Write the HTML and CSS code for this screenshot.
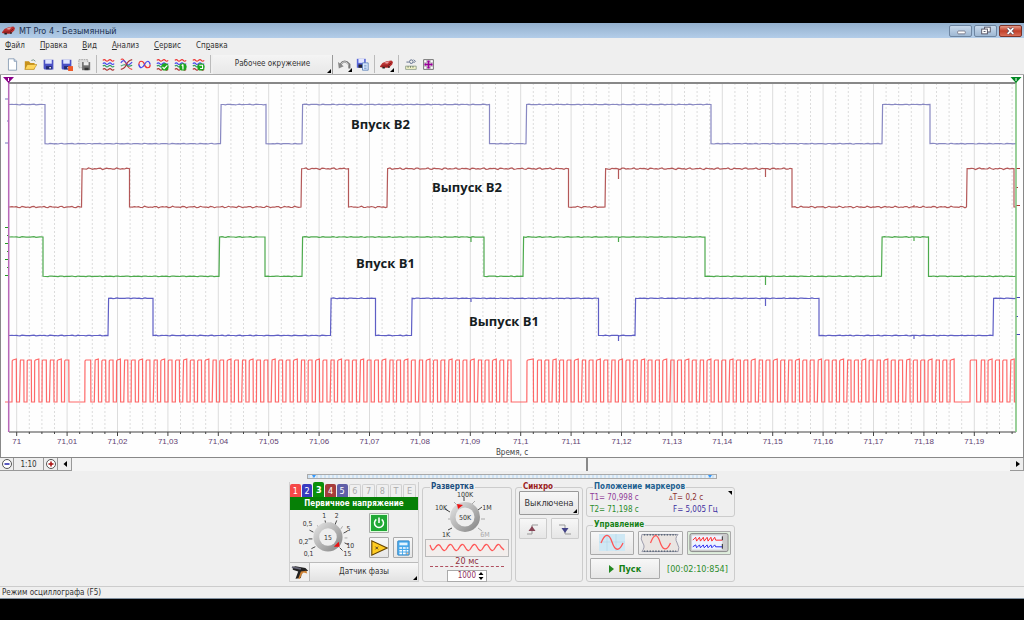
FILE: index.html
```html
<!DOCTYPE html>
<html lang="ru">
<head>
<meta charset="utf-8">
<title>MT Pro 4 - Безымянный</title>
<link rel="stylesheet" href="styles.css">
</head>
<body>
<svg class="defs" aria-hidden="true">
  <defs>
    <linearGradient id="knob" x1="0" y1="0" x2="1" y2="1"><stop offset="0" stop-color="#e8e8e8"/><stop offset="1" stop-color="#808080"/></linearGradient>
    <g id="car"><path d="M0 10 3 6 8 4 14 3 16 5 15 8 11 12 4 12 0 11Z" fill="#b93030"/><path d="M5 6 8 4.500 12 4 9 7Z" fill="#e9a0a0"/><path d="M2 10 9 10 14 6" fill="none" stroke="#6d1414"/><path d="M3 12h3M10 11h2" stroke="#222" stroke-width="2"/></g>
    <g id="disk"><path d="M2 2H14V14H3L2 13Z" fill="#4a50c4"/><path d="M4 2H12V7H4Z" fill="#dfe4ff"/><path d="M5 10H12V14H5Z" fill="#222a70"/><path d="M9 11h2v2H9Z" fill="#eee"/></g>
    <g id="waves" fill="none" stroke-width="1.4"><path d="M1 3q2-2 3.500 0t3.500 0 3.500 0 3.500 0" stroke="#e33"/><path d="M1 7q2-2 3.500 0t3.500 0 3.500 0 3.500 0" stroke="#44e"/><path d="M1 10q2-2 3.500 0t3.500 0 3.500 0 3.500 0" stroke="#396"/><path d="M1 14q2-2 3.500 0t3.500 0 3.500 0 3.500 0" stroke="#a33"/></g>
  </defs>
</svg>
<div class="app">
  <header class="titlebar">
    <svg class="icon" viewBox="0 0 16 16"><use href="#car"/></svg>
    <h1>MT Pro 4 - Безымянный</h1>
    <button class="win" aria-label="Свернуть"><svg viewBox="0 0 22 12"><rect x="8" y="6" width="8" height="3" rx="1" fill="#fff" stroke="#667" stroke-width=".8"/></svg></button>
    <button class="win" aria-label="Развернуть"><svg viewBox="0 0 22 12"><g fill="#fff" stroke="#556" stroke-width="1"><rect x="10" y="2" width="6" height="5"/><rect x="7" y="4" width="6" height="5"/></g><rect x="9" y="6" width="2" height="1" fill="#556"/></svg></button>
    <button class="win close" aria-label="Закрыть"><svg viewBox="0 0 22 12"><path d="M8 3 14 9M14 3 8 9" stroke="#545" stroke-width="3.200"/><path d="M8 3 14 9M14 3 8 9" stroke="#fff" stroke-width="1.800"/></svg></button>
  </header>
  <nav class="menu">
    <button><u>Ф</u>айл</button><button><u>П</u>равка</button><button><u>В</u>ид</button><button><u>А</u>нализ</button><button><u>С</u>ервис</button><button>Сп<u>р</u>авка</button>
  </nav>
  <div class="toolbar">
    <button class="tool" aria-label="Новый"><svg viewBox="0 0 16 16"><path d="M3 1H10L13 4V15H3Z" fill="#fff" stroke="#7d93ad"/><path d="M10 1V4H13" fill="#cfe0f2" stroke="#7d93ad"/></svg></button>
    <button class="tool" aria-label="Открыть"><svg viewBox="0 0 16 16"><path d="M1 4H6L8 6H13V14H1Z" fill="#c8921c"/><path d="M4 8H16L12 14H1Z" fill="#ffd65c" stroke="#a8780c" stroke-width=".6"/><path d="M9 3q3-2 5 1" fill="none" stroke="#687"/></svg></button>
    <button class="tool" aria-label="Сохранить"><svg viewBox="0 0 16 16"><use href="#disk"/></svg></button>
    <button class="tool" aria-label="Сохранить как"><svg viewBox="0 0 16 16"><use href="#disk"/><path d="M10 10H16V16H10Z" fill="#ef5a28"/></svg></button>
    <button class="tool" aria-label="Сохранить фрагмент"><svg viewBox="0 0 16 16"><path d="M1 2H12V12H1Z" fill="#ddd" stroke="#999" stroke-dasharray="2 1"/><path d="M5 5H15V15H5Z" fill="#707070"/><path d="M7 5H13V9H7Z" fill="#eee"/><path d="M8 12H13V15H8Z" fill="#333"/></svg></button>
    <i class="sep"></i>
    <button class="tool" aria-label="Осциллограммы"><svg viewBox="0 0 16 16"><use href="#waves"/></svg></button>
    <button class="tool" aria-label="Наложение"><svg viewBox="0 0 16 16"><g fill="none" stroke-width="1.300"><path d="M1 2q2-2 4 1t3 5 3 4 4 2" stroke="#e33"/><path d="M1 6q3-4 5-2t3 4 6-3" stroke="#44e"/><path d="M1 10q4-3 7-1t7 0" stroke="#396"/><path d="M1 14Q6 13 8 8T15 2" stroke="#a33"/></g></svg></button>
    <button class="tool" aria-label="Сравнение"><svg viewBox="0 0 16 16"><g fill="none" stroke-width="1.500"><path d="M1 9Q1 4 4 4T8 8 12 12 15 8" stroke="#e33"/><path d="M1 8Q2 12 4 12T8 8 12 4 15 8" stroke="#44e"/></g></svg></button>
    <button class="tool" aria-label="Принять"><svg viewBox="0 0 16 16"><use href="#waves"/><circle cx="11" cy="11" r="4.500" fill="#1ca61c"/><path d="M8 11 10 13 14 9" fill="none" stroke="#fff" stroke-width="1.500"/></svg></button>
    <button class="tool" aria-label="Загрузить"><svg viewBox="0 0 16 16"><use href="#waves"/><circle cx="11" cy="11" r="4.500" fill="#1ca61c"/><path d="M11 8V14M9.500 9.500 11 8" fill="none" stroke="#fff" stroke-width="1.500"/></svg></button>
    <button class="tool" aria-label="Повторить"><svg viewBox="0 0 16 16"><use href="#waves"/><circle cx="11" cy="11" r="4.500" fill="#1ca61c"/><path d="M9 9H13V13H10" fill="none" stroke="#fff" stroke-width="1.300"/></svg></button>
    <i class="sep"></i>
    <button class="workspace">Рабочее окружение</button>
    <button class="tool corner" aria-label="Отменить"><svg viewBox="0 0 16 16"><path d="M3 8Q8 1 14 8L14 13" fill="none" stroke="#777" stroke-width="2.600"/><path d="M0 5 1 13 7 10Z" fill="#888"/><path d="M4 7Q9 2 13 8" fill="none" stroke="#eee"/></svg></button>
    <button class="tool" aria-label="Сохранить окружение"><svg viewBox="0 0 16 16"><path d="M1 1H12V12H1Z" fill="#5967d8"/><path d="M3 1H10V6H3Z" fill="#e2e6ff"/><path d="M3 8H9V12H3Z" fill="#223"/><path d="M8 6H15V15H8Z" fill="#dceaff" stroke="#5780b8"/><path d="M10 9h3M10 11h3M10 13h3" stroke="#5780b8" stroke-width=".8"/></svg></button>
    <i class="sep"></i>
    <button class="tool corner" aria-label="Автомобиль"><svg viewBox="0 0 16 16"><use href="#car"/></svg></button>
    <i class="sep"></i>
    <button class="tool" aria-label="Линейка"><svg viewBox="0 0 16 16"><path d="M2 10H15V14H2Z" fill="#f4f4c8" stroke="#898"/><path d="M5 10v2M8 10v2M11 10v2" stroke="#565"/><circle cx="9" cy="4.500" r="2.200" fill="none" stroke="#457"/><path d="M3 5H6M12 2l2 2-2 2" fill="none" stroke="#457"/></svg></button>
    <button class="tool" aria-label="Маркеры"><svg viewBox="0 0 16 16"><path d="M2 2H14V14H2Z" fill="#fff" stroke="#555"/><path d="M2 6H14M2 10H14M6 2V14M10 2V14" stroke="#999" stroke-width=".8"/><path d="M8 3V13M3 8H13" stroke="#909" stroke-width="2"/><path d="M4 6v4M12 6v4M6 4h4M6 12h4" stroke="#909"/></svg></button>
  </div>

  <main class="scope">
    <svg id="plot" viewBox="1 0 1022 382" role="img" aria-label="Осциллограммы датчиков фазы">
      <g id="grid"></g>
      <g id="traces"></g>
      <g id="axis"></g>
      <g class="channel-name">
        <text x="351" y="54">Впуск В2</text>
        <text x="432" y="117">Выпуск В2</text>
        <text x="356" y="193">Впуск В1</text>
        <text x="469" y="251">Выпуск В1</text>
      </g>
      <text class="axis-label" x="512" y="380">Время, с</text>
    </svg>
  </main>

  <div class="scroll">
    <button aria-label="Уменьшить"><svg viewBox="0 0 12 12"><circle cx="6" cy="6" r="4.500" fill="#fff" stroke="#555"/><path d="M3.500 6h5" stroke="#22a" stroke-width="1.500"/></svg></button>
    <button class="ratio">1:10</button>
    <button aria-label="Увеличить"><svg viewBox="0 0 12 12"><circle cx="6" cy="6" r="4.500" fill="#fff" stroke="#555"/><path d="M3.500 6h5M6 3.500v5" stroke="#a11" stroke-width="1.500"/></svg></button>
    <button aria-label="Влево"><svg viewBox="0 0 12 12"><path d="M8 3v6L4.500 6Z"/></svg></button>
    <div class="track"><i class="thumb"></i></div>
    <button aria-label="Вправо"><svg viewBox="0 0 12 12"><path d="M5 3v6l4-3Z"/></svg></button>
  </div>

  <section class="controls">
    <div class="slider"><i></i><i></i></div>
    <div class="panels">
      <div class="channels">
        <div class="tabs">
          <button class="c1">1</button><button class="c2">2</button><button class="c3">3</button><button class="c4">4</button><button class="c5">5</button><button>6</button><button>7</button><button>8</button><button>T</button><button>E</button>
        </div>
        <h2>Первичное напряжение</h2>
        <div class="channel-body">
          <svg class="gain" viewBox="0 0 76 52" role="img" aria-label="Усиление 15">
            <g stroke="#444"><path d="M26 37 22 39M23 29H19M24 22 20 20M37 15 36 10M46 15 48 10M55 23 59 21M56 33 60 35M51 38 54 41"/><path d="M30 18 28 15M42 15V12M52 19 54 16M56 28H59" stroke="#aaa"/></g>
            <circle cx="39" cy="27" r="15" fill="url(#knob)"/><circle cx="39" cy="27" r="9" fill="#eee"/>
            <path d="M45 37 51 37 50 32Z" fill="#e11"/>
            <g class="dial"><text x="39" y="30">15</text><text x="18" y="16">0,5</text><text x="35" y="8">1</text><text x="48" y="8">2</text><text x="60" y="21">5</text><text x="62" y="38">10</text><text x="59" y="47">15</text><text x="14" y="34">0,2</text><text x="19" y="47">0,1</text></g>
          </svg>
          <div class="keys">
            <button class="power" aria-label="Включить"><svg viewBox="0 0 20 20"><path d="M7 6a5 5 0 1 0 6 0" fill="none" stroke="#fff" stroke-width="1.700"/><path d="M10 4v6" stroke="#fff" stroke-width="1.700"/></svg></button>
            <button class="amp" aria-label="Усилитель"><svg viewBox="0 0 20 20"><path d="M2 2V18L19 10Z" fill="#fc2" stroke="#654400" stroke-width="1.200"/><path d="M6 8.500 9 11.500M9 8.500 6 11.500" stroke="#432"/></svg></button>
            <button class="calc" aria-label="Калькулятор"><svg viewBox="0 0 20 20"><rect x="4" y="2" width="13" height="16" rx="1" fill="#48a9ec" stroke="#2877b4" stroke-width=".7"/><path d="M6 4h9v3H6z" fill="#e3f5ff"/><path d="M6 10h3M10 10h3M14 10h2M6 13h3M10 13h3M14 13h2M6 16h3M10 16h3" stroke="#fff" stroke-width="1.800"/><path d="M14 15h2v2h-2z" fill="#fb8"/></svg></button>
          </div>
        </div>
        <div class="sensor">
          <button aria-label="Тип датчика"><svg viewBox="0 0 20 18"><path d="M2 3 5 2 16 4 19 7 12 9 11 15 5 16 8 8 2 6Z" fill="#222"/><path d="M11 8 17 7 18 10 14 9 12 11 10 16 8 16Z" fill="#d08436"/><path d="M1 3 11 5" stroke="#667" stroke-width="2"/></svg></button>
          <button class="sensor-name">Датчик фазы</button>
        </div>
      </div>

      <fieldset class="sweep">
        <legend>Развертка</legend>
        <svg class="speed" viewBox="0 0 82 47" role="img" aria-label="Скорость 50K">
          <g stroke="#444"><path d="M26 37 22 39M24 21 19 18M38 10V6M52 19 56 16"/><path d="M26 28H22M31 14 28 11M46 13 49 10M55 28H59M52 37 56 40" stroke="#aaa"/></g>
          <circle cx="39" cy="26" r="15" fill="url(#knob)"/><circle cx="39" cy="26" r="9.500" fill="#eee"/><path d="M31 13 37 14 32 18Z" fill="#e11"/>
          <g class="dial"><text x="39" y="29">50K</text><text x="39" y="6">100K</text><text x="15" y="19">10K</text><text x="61" y="19">1M</text><text x="20" y="46">1K</text><text x="59" y="46" class="off">6M</text></g>
        </svg>
        <svg class="sine" viewBox="0 0 84 18"><rect x=".5" y=".5" width="83" height="17" fill="#f3eeec" stroke="#bbb"/><path d="M5 6C7 12 8 12 10 9S14 4 16 8 20 13 22 9 26 4 28 8 32 13 34 9 38 4 40 8 44 13 46 9 50 4 52 8 56 13 58 9 62 4 64 8 68 13 70 9 74 4 76 8L79 11" fill="none" stroke="#f55" stroke-width="1.300"/></svg>
        <output class="span">20 мс</output>
        <div class="spin"><input aria-label="Длительность" value="1000"><svg viewBox="0 0 7 10"><path d="M1 4 3.500 1 6 4ZM1 6 3.500 9 6 6Z"/></svg></div>
      </fieldset>

      <fieldset class="sync">
        <legend>Синхро</legend>
        <button class="mode">Выключена</button>
        <div class="edges">
          <button aria-label="Передний фронт"><svg viewBox="0 0 20 14"><path d="M4 12H9V3H15" fill="none" stroke="#999"/><path d="M5.500 9 9 4 12.500 9Z" fill="#845"/></svg></button>
          <button aria-label="Задний фронт"><svg viewBox="0 0 20 14"><path d="M4 3H10V12H16" fill="none" stroke="#999"/><path d="M6.500 6 10 11 13.500 6Z" fill="#448"/></svg></button>
        </div>
      </fieldset>

      <div class="right">
        <fieldset class="markers">
          <legend>Положение маркеров</legend>
          <span class="t1">T1= 70,998 с</span><span class="dt"><small>Δ</small>T= 0,2 с</span>
          <span class="t2">T2= 71,198 с</span><span class="freq">F= 5,005 Гц</span>
        </fieldset>
        <fieldset class="run">
          <legend>Управление</legend>
          <div class="views">
            <button aria-label="Осциллограф"><svg viewBox="0 0 36 20"><rect x="5" y="1" width="26" height="17" fill="#cfe8f4"/><path d="M13 1v17M22 1v17M5 9h26" stroke="#b4d5e5" stroke-width=".6"/><path d="M7 10C11 0 15 0 18 9s7 10 11 1" fill="none" stroke="#f55" stroke-width="1.300"/></svg></button>
            <button aria-label="Запись"><svg viewBox="0 0 42 20"><path d="M2 1H40Q36 5 39 10T40 19H2Q6 14 3 10T2 1Z" fill="#eae5e2" stroke="#99a"/><path d="M4 1.500H38M4 18.500H38" stroke="#456" stroke-width="1.500" stroke-dasharray="1.500 1.500"/><path d="M11 10C15 0 18 0 21 9s7 10 11 1" fill="none" stroke="#f55" stroke-width="1.300"/></svg></button>
            <button class="chosen" aria-label="Просмотр"><svg viewBox="0 0 42 20"><rect x="1" y="0" width="40" height="19" rx="2" fill="#ccc" stroke="#888"/><path d="M3 2h32v15H3z" fill="#eef3ff"/><path d="M4 7l3-3 1 4 3-4 1 4 3-4 1 4 3-4 1 4 3-4 1 4 3-4 1 3h7" fill="none" stroke="#f22"/><path d="M4 14l3-2 1 3 3-3 1 3 3-3 1 3 3-3 1 3 3-3 1 3 3-3 1 2h7" fill="none" stroke="#22e"/><path d="M35 3v4M35 11v5" stroke="#222"/></svg></button>
          </div>
          <div class="go"><button class="start"><svg viewBox="0 0 6 8"><path d="M0 0 5 4 0 8Z" fill="#282"/></svg>Пуск</button><output>[00:02:10:854]</output></div>
        </fieldset>
      </div>
    </div>
  </section>
  <footer class="status">Режим осциллографа (F5)</footer>
</div>
<script src="script.js"></script>
</body>
</html>
```
FILE: styles.css
```css
* { box-sizing: border-box; }
body { margin: 0; padding: 23px 0; min-height: 100vh; background: #000; color: #333; font: 8px/10px "DejaVu Sans Condensed", "DejaVu Sans", sans-serif; }
button, input, fieldset, legend, h1, h2 { margin: 0; padding: 0; font: inherit; color: inherit; }
button { display: flex; align-items: center; justify-content: center; border: 0; background: none; }
svg { display: block; }
.defs { position: absolute; width: 0; height: 0; }
.app { display: flex; flex-direction: column; background: #efefef; }

.titlebar { display: flex; align-items: center; gap: 2px; height: 15px; padding: 0 2px; background: linear-gradient(#93b0cd, #b3cde9); }
.titlebar .icon { width: 13px; height: 13px; }
.titlebar h1 { flex: 1; margin-left: 2px; font-size: 9px; color: #203050; }
.win { width: 23px; height: 12px; border: 1px solid #6e86a2; border-radius: 2px; background: linear-gradient(#c8d9ec, #9fb8d3); }
.win svg { width: 22px; height: 12px; }
.win.close { border-color: #7c3328; background: linear-gradient(#e49a8a, #c2402a 50%, #d9705a); }

.menu { display: flex; gap: 15px; height: 16px; padding: 0 5px; }
.menu u { text-underline-offset: 1px; }
.toolbar { display: flex; align-items: center; height: 21px; padding: 0 3px; border-bottom: 1px solid #aaa; }
.tool { position: relative; width: 18px; height: 18px; }
.tool svg { width: 13px; height: 13px; }
.sep { width: 1px; height: 18px; margin: 0 2px 0 3px; background: #bbb; }
.workspace { position: relative; width: 120px; height: 19px; margin-right: 2px; border-right: 1px solid #999; background: linear-gradient(#f4f4f4, #e8e8e8); }
.workspace::after, .corner::after, .sensor-name::after, .mode::after { content: ""; position: absolute; right: 1px; bottom: 1px; border-left: 4px solid transparent; border-bottom: 4px solid #000; }

.scope { border: solid #888; border-width: 0 1px; background: #fefefe; }
.scope svg { width: 100%; }
#traces { fill: none; opacity: .85; }
.channel-name { font: bold 13px "Open Sans", sans-serif; fill: #15201f; }
.axis-label { font: 8px "DejaVu Sans Condensed", sans-serif; text-anchor: middle; fill: #444; }
.tick-label { font: 8px "Liberation Sans", sans-serif; text-anchor: middle; fill: #604070; }
.major { stroke: #dcdcdc; }
.minor { stroke: #dcdcdc; stroke-dasharray: 2 2; }

.scroll { display: flex; height: 14px; border-top: 1px solid #888; background: #f5f5f5; }
.scroll button { width: 14px; border: solid #999; border-width: 0 1px 1px 0; background: #eee; }
.scroll svg { width: 12px; height: 12px; }
.scroll .ratio { width: 30px; padding-top: 2px; }
.track { flex: 1; }
.thumb { display: block; width: 55%; height: 13px; border-right: 2px solid #888; }

.controls { display: flex; flex-direction: column; align-items: center; padding-top: 3px; }
.slider { display: flex; justify-content: space-between; width: 410px; max-width: 100%; height: 5px; padding: 0 4px; border: 1px solid #aaa; background: repeating-linear-gradient(90deg, #cfe3f4 0 2px, #e8f1f8 2px 4px); }
.slider i { border: 2px solid transparent; border-top: 3px solid #39f; height: 3px; }
.panels { display: flex; gap: 3px; width: 446px; padding: 3px 0; }
fieldset { min-width: 0; border: 1px solid #ccc; border-radius: 3px; }
legend { margin-left: 7px; padding: 0 1px; font-weight: bold; line-height: 8px; color: #1c5080; }

.channels { width: 130px; height: 100px; display: flex; flex-direction: column; border: 1px solid #d0d0d0; border-top: 0; }
.tabs { display: flex; align-items: flex-end; gap: 1px; height: 15px; padding: 0 2px 0 0; }
.tabs button { flex: 1; height: 13px; border: 1px solid #d0d0d0; border-bottom: 0; border-radius: 2px 2px 0 0; font-size: 9px; color: #aaa; }
.tabs .c1, .tabs .c2, .tabs .c3, .tabs .c4, .tabs .c5 { border: 0; color: #fff; }
.tabs .c1 { background: #f54848; }
.tabs .c2 { background: #3a3ac0; }
.tabs .c3 { height: 15px; background: #0a900a; font-weight: bold; }
.tabs .c4 { background: #a63c3c; }
.tabs .c5 { background: #6060a8; }
.channels h2 { height: 13px; background: #068006; color: #fff; text-align: center; font-weight: bold; line-height: 13px; }
.channel-body { display: flex; flex: 1; }
.gain { width: 76px; height: 52px; }
.dial { font: 7px "DejaVu Sans Condensed", sans-serif; text-anchor: middle; fill: #333; }
.dial .off { fill: #aaa; }
.keys { display: grid; grid-template-columns: 20px 20px; grid-template-rows: 20px 21px; gap: 4px; padding: 3px 5px; }
.keys button, .mode, .edges button, .views button, .start { border: 1px solid #aaa; border-radius: 1px; background: linear-gradient(#f7f7f7, #e6e6e6); }
.keys svg { width: 18px; height: 18px; }
.keys .power { grid-column: 1 / 3; width: 20px; box-shadow: inset 0 0 0 1px #dfd; background: #20a835; }
.sensor { display: flex; height: 19px; border-top: 1px solid #bbb; }
.sensor svg { width: 18px; height: 17px; }
.sensor button:first-child { width: 20px; border-right: 1px solid #bbb; }
.sensor-name { position: relative; flex: 1; background: linear-gradient(#f8f8f8, #e2e2e2); }

.sweep { width: 90px; }
.sweep, .sync { height: 99px; margin-top: 1px; }
.speed { width: 82px; height: 47px; margin: 0 auto; overflow: visible; }
.sine { width: 84px; height: 18px; margin: 1px auto 0; }
.span { display: block; width: 74px; margin: 0 auto; color: #903040; font-size: 9px; line-height: 9px; text-align: center; border-bottom: 1px dashed #b05060; }
.spin { display: flex; align-items: center; width: 40px; height: 12px; margin: 3px auto 0; border: 1px solid #aaa; background: #fff; }
.spin input { flex: 1; min-width: 0; height: 10px; border: 0; background: none; text-align: right; color: #903060; }
.spin svg { width: 8px; height: 10px; margin: 0 1px; }

.sync { width: 68px; padding: 0 3px; }
.sync legend { margin-left: 3px; color: #9a2020; }
.mode { position: relative; width: 100%; height: 24px; border-color: #999; font-size: 9px; }
.edges { display: grid; grid-template-columns: 1fr 1fr; gap: 4px; margin-top: 3px; }
.edges button { height: 21px; border-color: #ccc; }
.edges svg { width: 20px; height: 14px; }

.right { flex: 1; margin-top: 1px; display: flex; flex-direction: column; gap: 4px; }
.markers { position: relative; display: grid; grid-template-columns: 1fr 62px; height: 34px; padding: 1px 3px; line-height: 12px; }
.markers::after { content: ""; position: absolute; right: 2px; top: 0; border-left: 4px solid transparent; border-top: 4px solid #000; }
.markers legend { margin-left: 3px; color: #1c6090; }
.t1 { color: #903c98; }
.t2 { color: #2c8c2c; }
.dt { color: #8c3030; }
.dt small { font-size: 6px; }
.freq { padding-left: 4px; color: #4030a0; }
.run { height: 61px; padding: 2px 3px; }
.run legend { margin-left: 3px; color: #148014; }
.views { display: grid; grid-template-columns: 1fr 1fr 1fr; gap: 4px; }
.views button { height: 24px; }
.views svg { width: 40px; height: 20px; }
.views .chosen { background: #dfeedd; }
.go { display: flex; align-items: center; gap: 7px; margin-top: 3px; color: #2c8c2c; font-size: 9px; }
.start { width: 70px; height: 21px; gap: 4px; font-weight: bold; color: #148014; }
.start svg { width: 6px; height: 8px; }

.status { height: 13px; margin-top: 1px; padding: 1px 2px; border-top: 1px solid #ccc; border-bottom: 1px solid #8090a0; }
```
FILE: script.js
```js
const NS = 'http://www.w3.org/2000/svg';
const el = (parent, name, attrs, text) => {
  const node = document.createElementNS(NS, name);
  for (const key in attrs) node.setAttribute(key, attrs[key]);
  if (text) node.textContent = text;
  document.getElementById(parent).append(node);
};

const LEFT = 9, RIGHT = 1016, TOP = 8, BOTTOM = 357;
const X0 = 16.7, STEP = 50.4;

// Time grid: one solid line each 10 ms, three dotted ones between
for (let i = 0; i < 80; i++) {
  const x = X0 + i * STEP / 4;
  if (x > RIGHT) break;
  const major = i % 4 === 0;
  el('grid', 'path', { d: `M${x} ${TOP}V${BOTTOM}`, class: major ? 'major' : 'minor' });
  el('axis', 'path', { d: `M${x} ${BOTTOM}v${major ? 4 : 2}`, stroke: '#444' });
  if (major) {
    const n = i / 4;
    const label = n === 0 ? '71' : n === 10 ? '71,1' : '71,' + String(n).padStart(2, '0');
    el('axis', 'text', { x, y: BOTTOM + 12, class: 'tick-label' }, label);
  }
}

// Digital channels: level toggles at each edge, with slight ripple
const channels = [
  { color: '#7474b8', hi: 29.5, lo: 68.7, up: true, amp: .4, edges: [45, 220.5, 266, 302, 489.5, 526, 711, 882, 930], spikes: [] },
  { color: '#a83c3c', hi: 93.7, lo: 132, up: false, amp: .9, edges: [81.5, 129.5, 301, 348.5, 387, 568.5, 605, 792, 966.5, 1014], spikes: [[618.5, 94, 10], [765.5, 94, 8], [914, 132, -2]] },
  { color: '#2f9c2f', hi: 162, lo: 201.3, up: true, amp: .4, edges: [43, 219, 265, 302, 484, 523, 705, 881.5, 928.5], spikes: [[471, 162, 5], [618.5, 162, 5], [765.5, 201, 9], [914, 162, 4]] },
  { color: '#4444bc', hi: 223.3, lo: 260.5, up: false, amp: .4, edges: [108, 153, 330.5, 375.5, 411.5, 598.5, 635, 819, 993], spikes: [[471, 223, 4], [618.5, 260, 6], [765.5, 223, 8], [914, 260, 4]] }
];
channels.forEach(c => {
  let x = LEFT, up = c.up, d = '';
  [...c.edges, RIGHT].forEach(end => {
    const y = up ? c.hi : c.lo;
    d += `${d ? 'L' : 'M'}${x + (d && up ? .6 : 0)} ${y}`;
    for (let p = x + 3; p < end - 1; p += 2) d += `L${p} ${(y + c.amp * Math.sin(p * .9) * Math.sin(p * .23)).toFixed(1)}`;
    d += `L${end} ${y}`;
    x = end;
    up = !up;
  });
  c.spikes.forEach(([sx, sy, h]) => { d += `M${sx} ${sy}v${h}`; });
  el('traces', 'path', { d, stroke: c.color, 'stroke-width': 1.2 });
});

// Crankshaft 60-2 toothed wheel signal
const HI = 285, LO = 327, PITCH = 7.37;
const teeth = [];
for (let i = 0; i < 8; i++) teeth.push([12 + i * 7.5, 16.3 + i * 7.5]);
teeth.push([84.8, 90.7]);
for (let i = 0; i < 57; i++) teeth.push([94.3 + i * PITCH, 98.3 + i * PITCH]);
teeth.push([526.8, 533.3]);
for (let i = 0; i < 57; i++) teeth.push([537.3 + i * PITCH, 541.4 + i * PITCH]);
teeth.push([970, 976.5]);
for (let i = 0; i < 5; i++) teeth.push([980.5 + i * PITCH, 984.7 + i * PITCH]);
let crank = `M5 ${LO}`;
teeth.forEach(([a, b], i) => {
  crank += `H${a}L${a + (i % 4 === 1 ? .8 : .2)} ${HI + 1}L${a + 1} ${HI}L${b} ${HI - (i % 3 ? 0 : 1)}L${b + .2} ${LO}`;
});
el('traces', 'path', { d: crank + `H${RIGHT}`, stroke: '#ff5050', 'stroke-width': 1.2 });

// Frame, value ticks and the two markers
el('axis', 'path', { d: `M${LEFT} ${TOP}H${RIGHT}`, stroke: '#888', 'stroke-width': 2 });
el('axis', 'path', { d: `M${LEFT} ${BOTTOM}H${RIGHT}`, stroke: '#444' });
[[24, 4], [46, 2], [68, 4]].forEach(([y, w]) => el('axis', 'path', { d: `M${LEFT} ${y}h${-w}`, stroke: '#77b' }));
[152, 160, 168, 176, 184, 192, 200].forEach((y, i) => el('axis', 'path', { d: `M${LEFT} ${y}.5h${i % 2 ? -2 : -4}`, stroke: '#292' }));
[[93, '#a33'], [112, '#a33'], [130, '#a33'], [222, '#44b'], [241, '#44b'], [259, '#44b']].forEach(([y, stroke], i) => el('axis', 'path', { d: `M${RIGHT} ${y}.5h${i % 3 === 1 ? 2 : 4}`, stroke }));
el('axis', 'path', { d: `M8.700 3V${BOTTOM}`, stroke: '#b868b8', 'stroke-width': 1.5 });
el('axis', 'path', { d: 'M3 2H14L8.500 8Z', fill: '#808' });
el('axis', 'path', { d: `M${RIGHT} 3V${BOTTOM}`, stroke: '#80c480', 'stroke-width': 1.6 });
el('axis', 'path', { d: 'M1010.500 2H1021.500L1016 8Z', fill: '#082' });
el('axis', 'path', { d: 'M8.500 3v3M1016 3v3', stroke: '#fff' });
```
